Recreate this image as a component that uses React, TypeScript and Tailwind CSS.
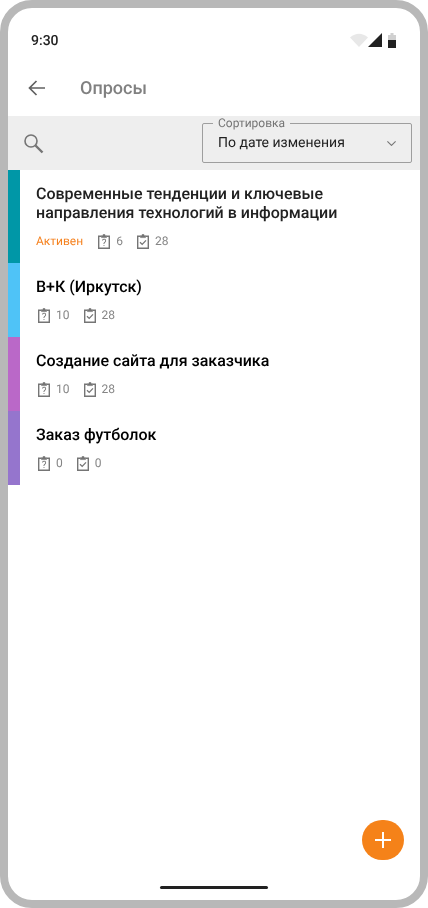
const items = [
  { color: "bg-[#0097a7]", title: ["Современные тенденции и ключевые", "направления технологий в информации"], active: true, q: 6, c: 28, text: "text-[#212121]" },
  { color: "bg-[#4fc3f7]", title: ["В+К (Иркутск)"], q: 10, c: 28, text: "text-black" },
  { color: "bg-[#ba68c8]", title: ["Создание сайта для заказчика"], q: 10, c: 28, text: "text-black" },
  { color: "bg-[#9575cd]", title: ["Заказ футболок"], q: 0, c: 0, text: "text-black" },
];

function Clip({ check }: { check?: boolean }) {
  return (
    <svg width="12" height="15" viewBox="0 0 12 15" fill="none" stroke="#757575" className="block shrink-0">
      <path d="M3.5 2.2H.7v12.1h10.6V2.2H8.5" strokeWidth="1.4" />
      <path d="M3.5 3.6V1.7h1.5V.6h2v1.1h1.5v1.9z" fill="#757575" strokeWidth="0.6" />
      {check ? (
        <path d="M3 8.2l2.2 2.2L9 6.4" strokeWidth="1.3" />
      ) : (
        <text x="6" y="12.2" textAnchor="middle" fontSize="10" fill="#757575" stroke="none" fontFamily="Roboto, sans-serif">?</text>
      )}
    </svg>
  );
}

function Item({ it }: { it: (typeof items)[number] }) {
  return (
    <div className="flex">
      <div className={`w-3 shrink-0 ${it.color}`} />
      <div className="flex-1 pl-4 pt-[14px] pb-[12px]">
        <div className={`text-[16px] leading-[19px] font-medium ${it.text}`}>
          {it.title.map((t) => (
            <div key={t}>{t}</div>
          ))}
        </div>
        <div className="mt-[9px] flex h-[20px] items-center text-[12px] text-[#858585]">
          {it.active && <span className="mr-[13px] text-[#f58220]">Активен</span>}
          <span className="ml-[2px]"><Clip /></span>
          <span className="ml-[6px]">{it.q}</span>
          <span className="ml-[14px]"><Clip check /></span>
          <span className="ml-[6px]">{it.c}</span>
        </div>
      </div>
    </div>
  );
}

export default function App() {
  return (
    <div className="h-[908px] w-[428px] overflow-hidden bg-white font-['Roboto',sans-serif] [text-rendering:geometricPrecision] will-change-transform">
      <div className="relative flex h-full flex-col rounded-[32px] border-8 border-[#b8b8b8] bg-white">
        <div className="flex h-[64px] shrink-0 items-center justify-between pt-[2px] pl-[23px] pr-[24px]">
          <span className="text-[14px] font-medium text-[#212121]">9:30</span>
          <div className="mt-[-2px] flex items-center">
            <svg width="18" height="14" viewBox="0 0 18 14"><path d="M0 4.5Q9-3 18 4.5L9 14z" fill="#e8e8e8" /></svg>
            <svg width="14" height="14" viewBox="0 0 14 14"><path d="M14 0V14H0z" fill="#212121" /></svg>
            <svg width="8" height="15" viewBox="0 0 8 15" className="ml-[6px]"><path d="M2.5 0h3v2H8v5H0V2h2.5z" fill="#d0d0d0" /><path d="M0 7h8v8H0z" fill="#212121" /></svg>
          </div>
        </div>
        <div className="flex h-[44px] shrink-0 items-center pb-[12px] pl-[20px]">
          <svg width="17" height="16" viewBox="0 0 17 16" fill="none" stroke="#616161" strokeWidth="1.7"><path d="M17 8H1.5M8.5 1L1.5 8l7 7" /></svg>
          <span className="ml-[35px] text-[18px] font-medium text-[#808080]">Опросы</span>
        </div>
        <div className="flex h-[54px] shrink-0 items-center justify-between bg-[#eeeeee] pl-[16px] pr-[8px]">
          <svg width="21" height="21" viewBox="0 0 21 21" fill="none" stroke="#757575">
            <circle cx="7" cy="8" r="6" strokeWidth="1.6" />
            <path d="M11.5 12.5l7 7" strokeWidth="2.4" />
          </svg>
          <div className="relative mt-[-1px] flex h-[40px] w-[210px] items-center justify-between rounded-[2px] border border-[#9e9e9e] pt-[1px] pl-[15px] pr-[15px]">
            <span className="absolute left-[10px] top-[-7px] bg-[#eeeeee] px-[5px] text-[12px] leading-[12px] text-[#757575]">Сортировка</span>
            <span className="text-[14px] text-[#212121]">По дате изменения</span>
            <svg width="9" height="5" viewBox="0 0 9 5" fill="none" stroke="#757575" strokeWidth="1.1"><path d="M.4.4L4.5 4.4 8.6.4" /></svg>
          </div>
        </div>
        <div className="flex flex-1 flex-col">
          {items.map((it) => (
            <Item key={it.title[0]} it={it} />
          ))}
        </div>
        <div className="flex h-[14px] shrink-0 justify-center">
          <div className="h-[3px] w-[108px] rounded-full bg-[#212121]" />
        </div>
        <button className="absolute bottom-[40px] right-[16px] flex h-[40px] w-[42px] items-center justify-center rounded-full bg-[#f58219]">
          <svg width="16" height="16" viewBox="0 0 16 16" stroke="#fff" strokeWidth="2"><path d="M8 0v16M0 8h16" /></svg>
        </button>
      </div>
    </div>
  );
}
